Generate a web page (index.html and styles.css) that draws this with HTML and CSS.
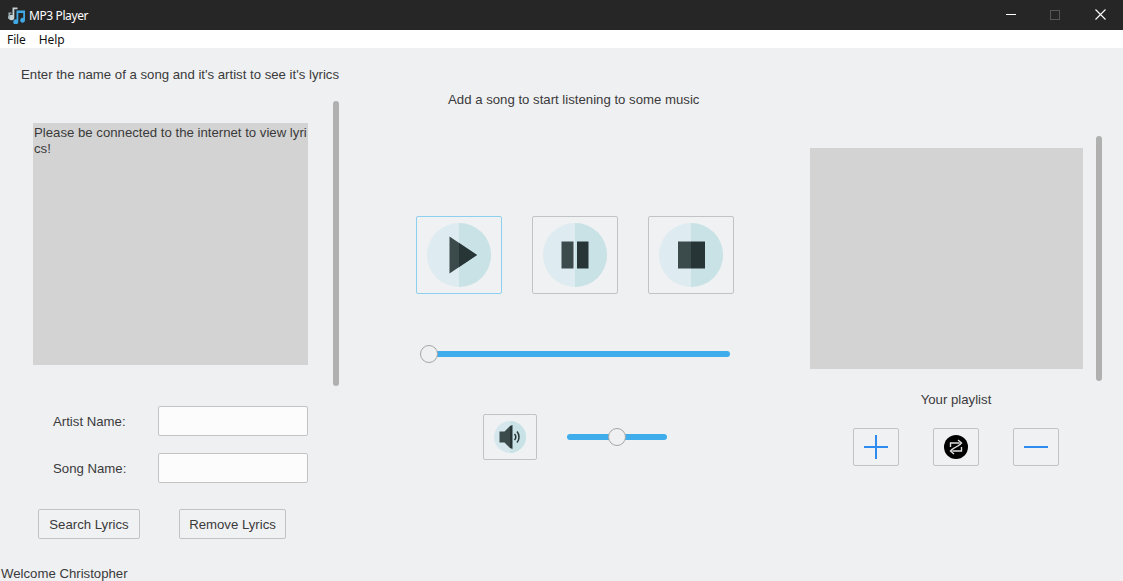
FILE: index.html
```html
<!DOCTYPE html>
<html lang="en">
<head>
  <meta charset="UTF-8" />
  <meta name="viewport" content="width=device-width, initial-scale=1.0" />
  <title>MP3 Player</title>
  <link rel="stylesheet" href="styles.css">
</head>
<body>
  <header class="titlebar">
    <svg class="app-icon" width="18" height="18" viewBox="0 0 18 18">
      <path d="M4.500 1.500h5v1.800H6.300v8.200a2.700 2.700 0 1 1-1.800-2.500z" fill="#c4d2d6"/>
      <path d="M0.500 6.500h3v1.300H2v3.700a1.300 1.300 0 1 1-1.500-1.300z" fill="#9fb2b8"/>
      <path d="M8.500 4.500H17v9.800a2.400 2.400 0 1 1-1.800-2.300V7h-4.900v8.800a2.500 2.500 0 1 1-1.800-2.400z" fill="#3fa9e6"/>
    </svg>
    <span class="app-title">MP3 Player</span>
    <div class="window-controls">
      <span class="win-btn"><i class="win-min"></i></span>
      <span class="win-btn"><i class="win-max"></i></span>
      <span class="win-btn">
        <svg width="11" height="11" viewBox="0 0 11 11"><path d="M0.500 0.500l10 10M10.500 0.500l-10 10" stroke="#fff" stroke-width="1.100"/></svg>
      </span>
    </div>
  </header>

  <nav class="menubar">
    <span>File</span>
    <span>Help</span>
  </nav>

  <main class="app">
    <section class="lyrics-col">
      <p class="lyrics-hint">Enter the name of a song and it's artist to see it's lyrics</p>
      <div class="lyrics-view">
        <div class="lyrics-box">Please be connected to the internet to view lyrics!</div>
        <div class="scrollbar lyrics-scroll"></div>
      </div>
      <div class="field field-artist">
        <label for="artist">Artist Name:</label>
        <input type="text" id="artist" />
      </div>
      <div class="field field-song">
        <label for="song">Song Name:</label>
        <input type="text" id="song" />
      </div>
      <div class="lyrics-actions">
        <button class="btn btn-search" type="button">Search Lyrics</button>
        <button class="btn btn-remove" type="button">Remove Lyrics</button>
      </div>
      <p class="welcome">Welcome Christopher</p>
    </section>

    <section class="player-col">
      <p class="player-hint">Add a song to start listening to some music</p>
      <div class="transport">
        <button class="btn media-btn is-focused" type="button" aria-label="Play">
          <svg width="64" height="64" viewBox="0 0 64 64">
            <circle cx="32" cy="32" r="32" fill="#deebf0"/>
            <path d="M32 0a32 32 0 0 1 0 64z" fill="#c8e2e6"/>
            <path d="M22.500 13.500v37l27.500-18.500z" fill="#3b4b4c"/>
            <path d="M32 20v24l18-12z" fill="#283536"/>
          </svg>
        </button>
        <button class="btn media-btn" type="button" aria-label="Pause">
          <svg width="64" height="64" viewBox="0 0 64 64">
            <circle cx="32" cy="32" r="32" fill="#deebf0"/>
            <path d="M32 0a32 32 0 0 1 0 64z" fill="#c8e2e6"/>
            <rect x="18.500" y="18.500" width="12" height="27" fill="#3b4b4c"/>
            <rect x="34" y="18.500" width="11.500" height="27" fill="#283536"/>
          </svg>
        </button>
        <button class="btn media-btn" type="button" aria-label="Stop">
          <svg width="64" height="64" viewBox="0 0 64 64">
            <circle cx="32" cy="32" r="32" fill="#deebf0"/>
            <path d="M32 0a32 32 0 0 1 0 64z" fill="#c8e2e6"/>
            <rect x="19" y="18.500" width="13" height="27" fill="#3b4b4c"/>
            <rect x="32" y="18.500" width="14" height="27" fill="#283536"/>
          </svg>
        </button>
      </div>
      <div class="slider seek-slider"><span class="thumb thumb-start"></span></div>
      <div class="volume">
        <button class="btn volume-btn" type="button" aria-label="Mute">
          <svg width="32" height="32" viewBox="0 0 32 32">
            <circle cx="16" cy="16" r="16" fill="#d6e8ed"/>
            <path d="M16 0a16 16 0 0 1 0 32z" fill="#c8e2e6"/>
            <path d="M5.500 10.500h5l5.500-5.500v22l-5.500-5.500h-5z" fill="#3b4b4c"/>
            <path d="M16 5l2.500-1v24l-2.500-1z" fill="#283536"/>
            <path d="M20.500 13a4.500 4.500 0 0 1 0 6M23 10.500a8.500 8.500 0 0 1 0 11" fill="none" stroke="#283536" stroke-width="1.500"/>
          </svg>
        </button>
        <div class="slider volume-slider"><span class="thumb thumb-mid"></span></div>
      </div>
    </section>

    <section class="playlist-col">
      <div class="playlist-view">
        <div class="playlist-box"></div>
        <div class="scrollbar playlist-scroll"></div>
      </div>
      <p class="playlist-label">Your playlist</p>
      <div class="playlist-actions">
        <button class="btn list-btn" type="button" aria-label="Add">
          <svg width="26" height="26" viewBox="0 0 26 26"><path d="M1 13h24M13 1v24" stroke="#2e8cf0" stroke-width="2"/></svg>
        </button>
        <button class="btn list-btn" type="button" aria-label="Shuffle">
          <svg width="24" height="24" viewBox="0 0 24 24">
            <circle cx="12" cy="12" r="12" fill="#000"/>
            <path d="M6.500 12V8h9M14 5l3.500 3-3.500 3M17 9l-10 6M17.500 12v4h-9M10 13l-3.500 3 3.500 3" fill="none" stroke="#e0e0e0" stroke-width="1.400"/>
          </svg>
        </button>
        <button class="btn list-btn" type="button" aria-label="Remove">
          <svg width="26" height="26" viewBox="0 0 26 26"><path d="M1 13h24" stroke="#2e8cf0" stroke-width="2"/></svg>
        </button>
      </div>
    </section>
  </main>
</body>
</html>
```

FILE: styles.css
```css
* {
  box-sizing: border-box;
}
body {
  margin: 0;
  height: 581px;
  overflow: hidden;
  font-family: "Liberation Sans", Arial, sans-serif;
  font-size: 13.2px;
  color: #3a3a3a;
  background: #eff0f2;
}
p {
  margin: 0;
}

/* window chrome */
.titlebar {
  display: flex;
  align-items: center;
  height: 30px;
  padding-left: 8px;
  background: #262626;
  color: #fff;
}
.app-icon {
  margin-right: 3px;
}
.app-title {
  font-family: "Noto Sans", "Open Sans", sans-serif;
  font-size: 12px;
  letter-spacing: -0.4px;
}
.window-controls {
  display: flex;
  align-self: flex-start;
  margin-left: auto;
}
.win-btn {
  display: flex;
  align-items: center;
  justify-content: center;
  width: 45px;
  height: 29px;
}
.win-min {
  width: 10px;
  height: 1px;
  background: #fff;
}
.win-max {
  width: 10px;
  height: 10px;
  margin-right: 1px;
  border: 1px solid #555;
}
.menubar {
  display: flex;
  gap: 13px;
  align-items: center;
  height: 18px;
  padding: 1px 0 0 7px;
  background: #fff;
  color: #111;
  font-family: "Noto Sans", "Open Sans", sans-serif;
  font-size: 12px;
  letter-spacing: -0.1px;
}

/* columns */
.app {
  display: grid;
  grid-template-columns: 345px 465px 1fr;
  height: 533px;
}

/* shared controls */
.btn {
  display: flex;
  align-items: center;
  justify-content: center;
  padding: 0;
  border: 1px solid #c2c3c5;
  border-radius: 2px;
  background: #f0f1f3;
  color: #3a3a3a;
  font-family: inherit;
  font-size: 13.2px;
}
.scrollbar {
  width: 6px;
  border-radius: 3px;
  background: #b0b0b0;
}
.slider {
  position: relative;
  height: 6px;
  border-radius: 3px;
  background: #3fadeb;
}
.thumb {
  position: absolute;
  top: -6px;
  width: 18px;
  height: 18px;
  border: 1px solid #a6a6a6;
  border-radius: 50%;
  background: #eff0f2;
}
.thumb-start {
  left: -1px;
}
.thumb-mid {
  left: 41px;
}

/* lyrics */
.lyrics-col {
  padding-top: 19px;
}
.lyrics-hint {
  height: 16px;
  margin-left: 21px;
  line-height: 16px;
  white-space: nowrap;
}
.lyrics-view {
  display: flex;
  align-items: flex-start;
  height: 285px;
  margin: 18px 0 0 33px;
}
.lyrics-box {
  width: 275px;
  height: 242px;
  margin-top: 22px;
  padding: 2px 1px;
  background: #d3d3d3;
  line-height: 16px;
  word-break: break-all;
}
.lyrics-scroll {
  height: 285px;
  margin-left: 25px;
}
.field {
  display: flex;
  align-items: center;
  width: 308px;
  height: 30px;
}
.field-artist {
  margin-top: 20px;
}
.field-song {
  margin-top: 17px;
}
.field label {
  width: 158px;
  padding-left: 53px;
}
.field input {
  width: 150px;
  height: 30px;
  border: 1px solid #c2c3c5;
  border-radius: 2px;
  background: #fcfcfc;
}
.lyrics-actions {
  display: flex;
  gap: 39px;
  margin: 26px 0 0 38px;
}
.btn-search {
  width: 102px;
  height: 30px;
}
.btn-remove {
  width: 107px;
  height: 30px;
}
.welcome {
  margin: 27px 0 0 1px;
  line-height: 16px;
}

/* player */
.player-col {
  padding-top: 44px;
}
.player-hint {
  height: 16px;
  margin-left: 103px;
  line-height: 16px;
}
.transport {
  display: flex;
  gap: 30px;
  margin: 108px 0 0 71px;
}
.media-btn {
  width: 86px;
  height: 78px;
}
.media-btn.is-focused {
  border-color: #8ccfee;
}
.seek-slider {
  width: 309px;
  margin: 57px 0 0 76px;
}
.volume {
  display: flex;
  align-items: center;
  gap: 30px;
  margin: 57px 0 0 138px;
}
.volume-btn {
  width: 54px;
  height: 46px;
}
.volume-slider {
  width: 100px;
}

/* playlist */
.playlist-view {
  display: flex;
  align-items: flex-start;
  height: 245px;
  margin-top: 88px;
}
.playlist-box {
  width: 273px;
  height: 221px;
  margin-top: 12px;
  background: #d3d3d3;
}
.playlist-scroll {
  height: 245px;
  margin-left: 13px;
}
.playlist-label {
  width: 292px;
  margin-top: 11px;
  line-height: 16px;
  text-align: center;
}
.playlist-actions {
  display: flex;
  gap: 34px;
  margin: 20px 0 0 43px;
}
.list-btn {
  width: 46px;
  height: 38px;
}
```
